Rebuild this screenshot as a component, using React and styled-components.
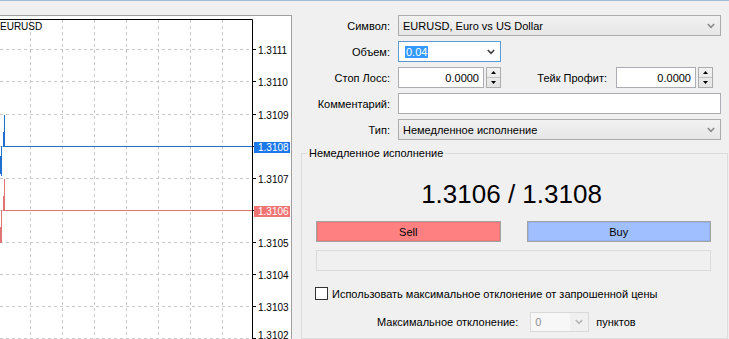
import React from "react";
import styled, { createGlobalStyle } from "styled-components";

const GlobalStyle = createGlobalStyle`
  html, body {
    margin: 0;
    padding: 0;
    background: #f0f0f0;
    overflow: hidden;
  }
  body {
    font-family: "Liberation Sans", Arial, sans-serif;
    font-size: 11px;
    color: #000;
  }
`;

const Window = styled.div`
  width: 729px;
  height: 339px;
  box-sizing: border-box;
  border-top: 1px solid #9fbcd8;
  display: flex;
  overflow: hidden;
  background: #f0f0f0;
`;

const ChartPanel = styled.div`
  width: 292px;
  flex: none;
  margin-top: 14px;
  box-sizing: border-box;
  background: #fff;
  border-top: 1px solid #a0a0a0;
  border-right: 1px solid #a0a0a0;
  overflow: hidden;
`;

const FormPanel = styled.div`
  flex: 1;
  display: flex;
  flex-direction: column;
  padding-top: 14px;
  min-width: 0;
`;

const FormGrid = styled.div`
  display: grid;
  grid-template-columns: 98px 1fr;
  grid-auto-rows: 21px;
  column-gap: 8px;
  row-gap: 5px;
  align-items: center;
  padding-right: 8px;
`;

const Label = styled.label`
  text-align: right;
  white-space: nowrap;
  color: #000;
`;

const Select = styled.div`
  height: 21px;
  box-sizing: border-box;
  border: 1px solid #acacac;
  background: linear-gradient(#f2f2f2, #e6e6e6);
  display: flex;
  align-items: center;
  padding: 0 5px 0 4px;
  width: ${(p) => p.$width || "auto"};
  ${(p) => (p.$focused ? "border-color: #5b9bd5; background: #fff;" : "")}
`;

const SelectText = styled.span`
  flex: 1;
  white-space: nowrap;
  overflow: hidden;
`;

const Highlight = styled.span`
  background: #3399ff;
  color: #fff;
  padding: 0 1px;
  margin-left: 2px;
`;

const TextInput = styled.div`
  height: 21px;
  box-sizing: border-box;
  border: 1px solid #abadb3;
  background: #fff;
  display: flex;
  align-items: center;
  justify-content: flex-end;
  padding: 0 4px;
  flex: 1;
`;

const SpinGroup = styled.div`
  display: flex;
  gap: 2px;
  width: ${(p) => p.$width}px;
  flex: none;
  height: 21px;
`;

const SpinButtons = styled.div`
  width: 15px;
  box-sizing: border-box;
  border: 1px solid #acacac;
  background: linear-gradient(#f2f2f2, #e4e4e4);
  display: flex;
  flex-direction: column;
`;

const SpinHalf = styled.div`
  flex: 1;
  display: flex;
  align-items: center;
  justify-content: center;
  & + & {
    border-top: 1px solid #c4c4c4;
  }
`;

const SplitRow = styled.div`
  display: flex;
  align-items: center;
  height: 21px;
`;

const InlineLabel = styled.span`
  flex: 1;
  text-align: right;
  padding-right: 9px;
  white-space: nowrap;
`;

const GroupBox = styled.fieldset`
  margin: 7px 1px 0 9px;
  border: 1px solid #dcdcdc;
  padding: 0 16px 0 14px;
  flex: 1;
  min-width: 0;
`;

const Legend = styled.legend`
  margin-left: -9px;
  padding: 0 2px;
  font-size: 11px;
  line-height: 13px;
`;

const Quote = styled.div`
  text-align: center;
  font-size: 26px;
  line-height: 30px;
  margin-top: 19px;
  padding-right: 4px;
`;

const TradeRow = styled.div`
  display: grid;
  grid-template-columns: 1fr 1fr;
  column-gap: 26px;
  margin-top: 12px;
`;

const TradeButton = styled.button`
  height: 21px;
  box-sizing: border-box;
  border: 1px solid #a3a3a3;
  box-shadow: inset 0 0 0 1px rgba(0, 0, 0, 0.06);
  background: ${(p) => p.$bg};
  font-family: inherit;
  font-size: 11px;
  color: #000;
  padding: 0;
`;

const StatusBar = styled.div`
  height: 21px;
  box-sizing: border-box;
  border: 1px solid #dadada;
  margin-top: 8px;
`;

const CheckRow = styled.div`
  display: flex;
  align-items: center;
  gap: 4px;
  margin: 16px 0 0 -1px;
`;

const CheckBox = styled.span`
  width: 13px;
  height: 13px;
  box-sizing: border-box;
  border: 1px solid #333;
  background: #fff;
  flex: none;
`;

const DeviationRow = styled.div`
  display: flex;
  align-items: center;
  margin-top: 12px;
  padding-left: 61px;
`;

const DisabledCombo = styled.div`
  width: 59px;
  height: 20px;
  box-sizing: border-box;
  border: 1px solid #d9d9d9;
  margin: 0 7px 0 12px;
  display: flex;
  align-items: center;
  color: #8d8d8d;
`;

const ComboValue = styled.span`
  flex: 1;
  align-self: stretch;
  display: flex;
  align-items: center;
  padding-left: 4px;
  background: #f7f7f7;
`;

const ComboArrow = styled.span`
  width: 18px;
  display: flex;
  align-items: center;
  justify-content: center;
`;

const Chevron = ({ color = "#606060" }) => (
  <svg width="8" height="6" viewBox="0 0 8 6">
    <path d="M0.8 1 L4 4.4 L7.2 1" fill="none" stroke={color} strokeWidth="1.6" />
  </svg>
);

const Arrow = ({ up }) => (
  <svg width="5" height="3" viewBox="0 0 5 3">
    <path d={up ? "M0 3 L2.5 0 L5 3 Z" : "M0 0 L2.5 3 L5 0 Z"} fill="#000" />
  </svg>
);

const Spinner = ({ value, width }) => (
  <SpinGroup $width={width}>
    <TextInput>{value}</TextInput>
    <SpinButtons>
      <SpinHalf>
        <Arrow up />
      </SpinHalf>
      <SpinHalf>
        <Arrow />
      </SpinHalf>
    </SpinButtons>
  </SpinGroup>
);

const prices = ["1.3111", "1.3110", "1.3109", "1.3108", "1.3107", "1.3106", "1.3105", "1.3104", "1.3103", "1.3102"];
const gridY = (i) => Math.round(33.3 + 32.1 * i) + 0.5;

const Chart = () => (
  <svg width="291" height="323" style={{ display: "block" }}>
    <g stroke="#c8c8c8" strokeDasharray="3 3">
      {[30, 62, 94, 126, 158, 190, 222].map((x) => (
        <line key={x} x1={x + 0.5} y1="4" x2={x + 0.5} y2="323" />
      ))}
      {prices.map((p, i) => (
        <line key={p} x1="0" y1={gridY(i)} x2="252" y2={gridY(i)} />
      ))}
    </g>
    <path d="M0 3.5 H252.5 V323" fill="none" stroke="#000" />
    {prices.map((p, i) => (
      <line key={p} x1="252" y1={gridY(i)} x2="256" y2={gridY(i)} stroke="#000" />
    ))}
    <text x="0" y="13.5" fontSize="10" fontFamily="Liberation Sans, Arial, sans-serif">EURUSD</text>
    <g fill="none" stroke="#1e6fd0">
      <path d="M4.5 99 V130 M3.5 116 V131 M1.5 130 V160 M0.5 140 V158" />
      <line x1="4" y1="130.5" x2="252" y2="130.5" />
    </g>
    <g fill="none" stroke="#e07474">
      <path d="M4.5 163 V195 M3.5 180 V195 M1.5 194 V227 M0.5 211 V227" />
      <line x1="4" y1="194.5" x2="252" y2="194.5" />
    </g>
    {prices.map((p, i) => {
      const active = p === "1.3108" ? "#1a78ea" : p === "1.3106" ? "#f07474" : null;
      const y = i === 9 ? 318 : gridY(i);
      return (
        <g key={p}>
          {active && <rect x="254" y={y - 4.5} width="36" height="11" fill={active} />}
          <text
            x="258"
            y={y + 1}
            dominantBaseline="central"
            fontSize="10"
            fontFamily="Liberation Sans, Arial, sans-serif"
            fill={active ? "#fff" : "#000"}
          >
            {p}
          </text>
        </g>
      );
    })}
  </svg>
);

const App = () => (
  <>
    <GlobalStyle />
    <Window>
      <ChartPanel>
        <Chart />
      </ChartPanel>
      <FormPanel>
        <FormGrid>
          <Label>Символ:</Label>
          <Select>
            <SelectText>EURUSD, Euro vs US Dollar</SelectText>
            <Chevron color="#8a8a8a" />
          </Select>
          <Label>Объем:</Label>
          <Select $width="103px" $focused>
            <SelectText>
              <Highlight>0.04</Highlight>
            </SelectText>
            <Chevron color="#404040" />
          </Select>
          <Label>Стоп Лосс:</Label>
          <SplitRow>
            <Spinner value="0.0000" width={103} />
            <InlineLabel>Тейк Профит:</InlineLabel>
            <Spinner value="0.0000" width={97} />
            <span style={{ width: 8, flex: "none" }} />
          </SplitRow>
          <Label>Комментарий:</Label>
          <TextInput />
          <Label>Тип:</Label>
          <Select>
            <SelectText>Немедленное исполнение</SelectText>
            <Chevron color="#8a8a8a" />
          </Select>
        </FormGrid>
        <GroupBox>
          <Legend>Немедленное исполнение</Legend>
          <Quote>1.3106 / 1.3108</Quote>
          <TradeRow>
            <TradeButton $bg="#ff8080">Sell</TradeButton>
            <TradeButton $bg="#a0bfff">Buy</TradeButton>
          </TradeRow>
          <StatusBar />
          <CheckRow>
            <CheckBox />
            <span>Использовать максимальное отклонение от запрошенной цены</span>
          </CheckRow>
          <DeviationRow>
            <span>Максимальное отклонение:</span>
            <DisabledCombo>
              <ComboValue>0</ComboValue>
              <ComboArrow>
                <Chevron color="#b5b5b5" />
              </ComboArrow>
            </DisabledCombo>
            <span>пунктов</span>
          </DeviationRow>
        </GroupBox>
      </FormPanel>
    </Window>
  </>
);

export default App;
